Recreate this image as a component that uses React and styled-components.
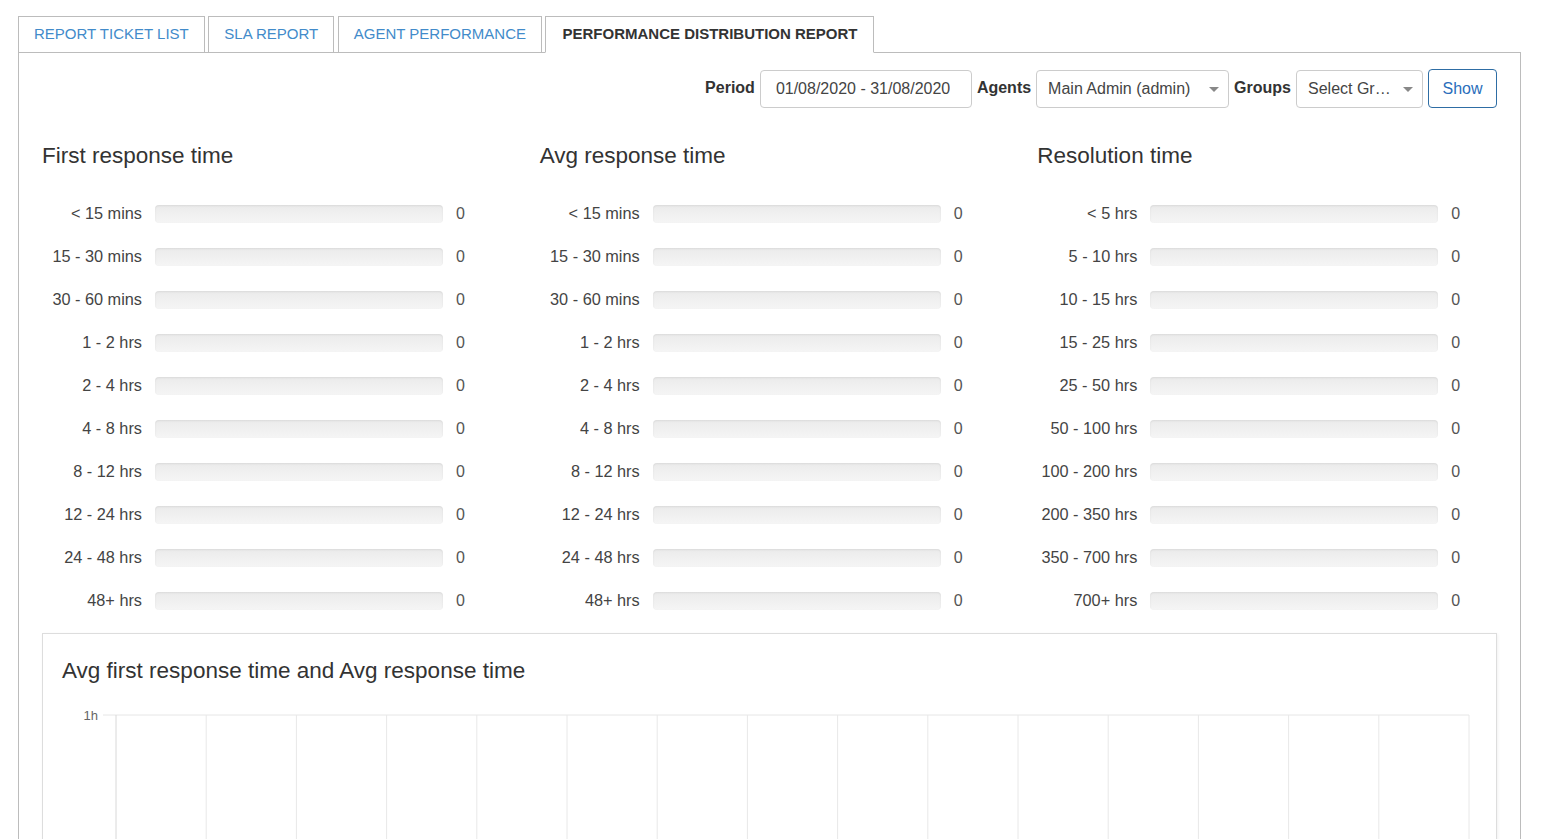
import React from "react";
import styled, { createGlobalStyle } from "styled-components";

const GlobalStyle = createGlobalStyle`
  html, body {
    margin: 0;
    padding: 0;
    background: #fff;
    font-family: "Liberation Sans", Arial, sans-serif;
    color: #333;
    overflow: hidden;
  }
`;

const Page = styled.div`
  padding: 16px 21px 0 18px;
`;

const Tabs = styled.ul`
  display: flex;
  gap: 3.5px;
  margin: 0;
  padding: 0;
  list-style: none;
  border-bottom: 1px solid #bcbcbc;
  height: 36px;
`;

const Tab = styled.li`
  box-sizing: border-box;
  display: flex;
  align-items: center;
  padding: 0 ${(p) => (p.active ? "16px" : "15px")} 2px;
  height: ${(p) => (p.active ? "37px" : "36px")};
  border: 1px solid #bcbcbc;
  border-bottom: ${(p) => (p.active ? "1px solid #fff" : "none")};
  background: #fff;
  font-size: 15px;
  font-weight: ${(p) => (p.active ? "bold" : "normal")};
  color: ${(p) => (p.active ? "#333" : "#428bca")};
  cursor: pointer;
  white-space: nowrap;
`;

const Panel = styled.div`
  border: 1px solid #bcbcbc;
  border-top: none;
  padding: 17px 23px 0 23px;
  min-height: 900px;
`;

const FilterBar = styled.div`
  display: flex;
  justify-content: flex-end;
  align-items: center;
  gap: 5px;
`;

const FilterLabel = styled.label`
  font-size: 16px;
  font-weight: bold;
  color: #333;
  margin-top: -2px;
`;

const Field = styled.div`
  position: relative;
  box-sizing: border-box;
  width: ${(p) => p.width}px;
  height: 38px;
  border: 1px solid #ccc;
  border-radius: 4px;
  display: flex;
  align-items: center;
  padding: ${(p) => (p.select ? "0 28px 0 11px" : "0 15px")};
  font-size: 16px;
  color: #444;
  white-space: nowrap;
  overflow: hidden;
  background: #fff;
`;

const FieldText = styled.span`
  overflow: hidden;
  text-overflow: ellipsis;
  white-space: nowrap;
`;

const Caret = styled.span`
  position: absolute;
  right: 9px;
  top: 16px;
  width: 0;
  height: 0;
  border-left: 5px solid transparent;
  border-right: 5px solid transparent;
  border-top: 5px solid #888;
`;

const ShowButton = styled.button`
  box-sizing: border-box;
  height: 39px;
  width: 69px;
  border: 1px solid #2e6da4;
  border-radius: 4px;
  background: #fff;
  color: #2a6ebb;
  font-family: inherit;
  font-size: 16px;
  margin-top: -1px;
`;

const Columns = styled.div`
  display: grid;
  grid-template-columns: repeat(3, 1fr);
  column-gap: 38px;
  margin-top: 35px;
`;

const SectionTitle = styled.h3`
  margin: 0 0 23px;
  font-size: 22.5px;
  line-height: 26px;
  font-weight: normal;
  color: #333;
`;

const BarRow = styled.div`
  display: grid;
  grid-template-columns: 100px 288px auto;
  column-gap: 13px;
  align-items: center;
  height: 43px;
`;

const BarLabel = styled.span`
  text-align: right;
  font-size: 16.3px;
  color: #444;
`;

const Track = styled.div`
  height: 18px;
  border-radius: 4px;
  background: linear-gradient(to bottom, #ebebeb, #f5f5f5);
  box-shadow: inset 0 1px 2px rgba(0, 0, 0, 0.08);
  overflow: hidden;
`;

const Fill = styled.div`
  height: 100%;
  background: #337ab7;
`;

const BarValue = styled.span`
  font-size: 16px;
  color: #555;
`;

const ChartCard = styled.div`
  margin-top: 11px;
  border: 1px solid #ddd;
  box-shadow: 1px 1px 3px rgba(0, 0, 0, 0.06);
  padding: 24px 19px 0 19px;
  min-height: 400px;
`;

const ChartTitle = styled.h3`
  margin: 0;
  font-size: 22.5px;
  line-height: 26px;
  font-weight: normal;
  color: #333;
`;

const ChartSvg = styled.svg`
  display: block;
  margin-top: 8px;
`;

const sections = [
  {
    title: "First response time",
    rows: ["< 15 mins", "15 - 30 mins", "30 - 60 mins", "1 - 2 hrs", "2 - 4 hrs", "4 - 8 hrs", "8 - 12 hrs", "12 - 24 hrs", "24 - 48 hrs", "48+ hrs"],
  },
  {
    title: "Avg response time",
    rows: ["< 15 mins", "15 - 30 mins", "30 - 60 mins", "1 - 2 hrs", "2 - 4 hrs", "4 - 8 hrs", "8 - 12 hrs", "12 - 24 hrs", "24 - 48 hrs", "48+ hrs"],
  },
  {
    title: "Resolution time",
    rows: ["< 5 hrs", "5 - 10 hrs", "10 - 15 hrs", "15 - 25 hrs", "25 - 50 hrs", "50 - 100 hrs", "100 - 200 hrs", "200 - 350 hrs", "350 - 700 hrs", "700+ hrs"],
  },
];

function Chart() {
  const left = 54;
  const right = 1407;
  const top = 23;
  const step = (right - left) / 15;
  const xs = Array.from({ length: 16 }, (_, i) => left + i * step);
  return (
    <ChartSvg width="1415" height="300">
      <text x="36" y={top + 4.5} textAnchor="end" fontSize="13" fill="#666" fontFamily="Liberation Sans, Arial, sans-serif">
        1h
      </text>
      <line x1="41" y1={top} x2={right} y2={top} stroke="#e6e6e6" strokeWidth="1" />
      {xs.map((x, i) => (
        <line key={i} x1={x} y1={top} x2={x} y2="300" stroke={i === 0 ? "#d8d8d8" : "#e8e8e8"} strokeWidth="1" />
      ))}
    </ChartSvg>
  );
}

export default function App() {
  return (
    <Page>
      <GlobalStyle />
      <Tabs>
        <Tab>REPORT TICKET LIST</Tab>
        <Tab>SLA REPORT</Tab>
        <Tab>AGENT PERFORMANCE</Tab>
        <Tab active>PERFORMANCE DISTRIBUTION REPORT</Tab>
      </Tabs>
      <Panel>
        <FilterBar>
          <FilterLabel>Period</FilterLabel>
          <Field width={212}>
            <FieldText>01/08/2020 - 31/08/2020</FieldText>
          </Field>
          <FilterLabel>Agents</FilterLabel>
          <Field width={193} select>
            <FieldText>Main Admin (admin)</FieldText>
            <Caret />
          </Field>
          <FilterLabel>Groups</FilterLabel>
          <Field width={127} select>
            <FieldText>Select Groups</FieldText>
            <Caret />
          </Field>
          <ShowButton>Show</ShowButton>
        </FilterBar>

        <Columns>
          {sections.map((s) => (
            <div key={s.title}>
              <SectionTitle>{s.title}</SectionTitle>
              {s.rows.map((r) => (
                <BarRow key={r}>
                  <BarLabel>{r}</BarLabel>
                  <Track>
                    <Fill style={{ width: "0%" }} />
                  </Track>
                  <BarValue>0</BarValue>
                </BarRow>
              ))}
            </div>
          ))}
        </Columns>

        <ChartCard>
          <ChartTitle>Avg first response time and Avg response time</ChartTitle>
          <Chart />
        </ChartCard>
      </Panel>
    </Page>
  );
}
